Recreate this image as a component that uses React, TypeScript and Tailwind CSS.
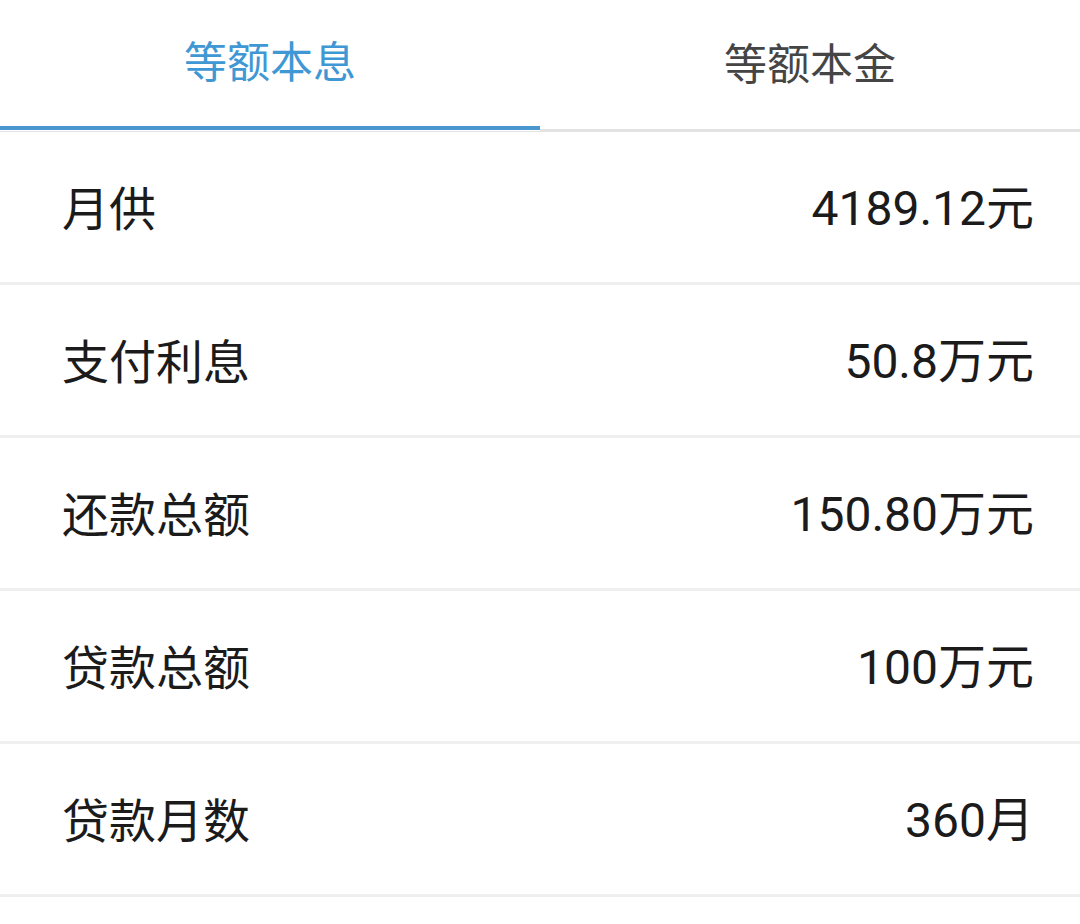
import React from "react";

const rows: [string, string][] = [
  ["月供", "4189.12元"],
  ["支付利息", "50.8万元"],
  ["还款总额", "150.80万元"],
  ["贷款总额", "100万元"],
  ["贷款月数", "360月"],
];

export default function App() {
  return (
    <div
      className="w-[1080px] h-[924px] bg-white overflow-hidden"
      style={{ fontFamily: 'Roboto, "Noto Sans CJK SC", sans-serif' }}
    >
      <div className="flex h-[132px]">
        <div className="flex-1 flex flex-col">
          <div className="flex-1 flex items-center justify-center pt-[1px]">
            <span className="text-[43px] text-[#3f98d4] leading-none">等额本息</span>
          </div>
          <div className="h-[4px] bg-[#4a97cf] mb-[1px]" />
          <div className="h-[1px] bg-[#e3e3e3]" />
        </div>
        <div className="flex-1 flex flex-col">
          <div className="flex-1 flex items-center justify-center pt-[1px]">
            <span className="text-[43px] text-[#454545] leading-none">等额本金</span>
          </div>
          <div className="h-[3px] bg-[#e3e3e3]" />
        </div>
      </div>
      {rows.map(([label, value]) => (
        <div
          key={label}
          className="h-[153px] flex items-center justify-between pl-[62px] pr-[46px] border-b-[3px] border-[#efefef]"
        >
          <span className="text-[47px] text-[#1b1b1b] leading-none pt-[4px]">{label}</span>
          <span className="text-[48px] text-[#1b1b1b] leading-none pt-[4px]">{value}</span>
        </div>
      ))}
    </div>
  );
}
